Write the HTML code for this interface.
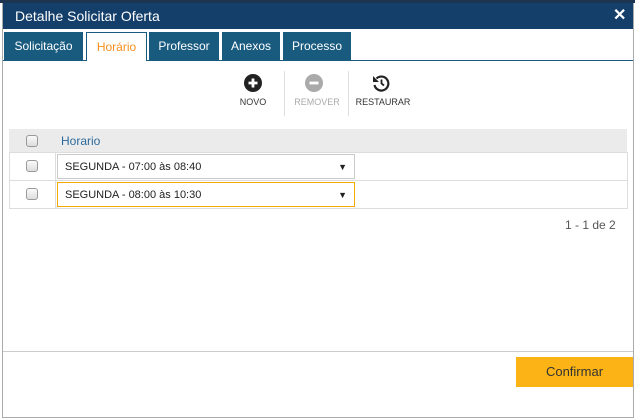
<!DOCTYPE html>
<html><head><style>
*{box-sizing:border-box;margin:0;padding:0}
body{width:635px;height:420px;background:#fff;font-family:"Liberation Sans",sans-serif;position:relative;overflow:hidden}
.a{position:absolute}
.tab{position:absolute;top:32px;height:28px;background:#195a7f;color:#fff;font-size:12px;line-height:29px;text-align:center}
.cb{position:absolute;width:12px;height:12px;border:1px solid #999;border-radius:3px;background:linear-gradient(#fafafa,#ddd)}
.sel{position:absolute;left:57px;width:298px;height:25px;border:1px solid #ccc;font-size:11px;line-height:24px;padding-left:7px;color:#222}
.sel span{position:absolute;right:7px;font-size:9px}
.lbl{position:absolute;top:97px;font-size:9px;color:#333;text-align:center}
</style></head><body>
<div class="a" style="left:0;top:0;width:635px;height:3px;background:#1d3550"></div>
<div class="a" style="left:2px;top:3px;width:632px;height:415px;border:1px solid #aaa;border-top:none"></div>
<div class="a" style="left:3px;top:3px;width:630px;height:26px;background:#143f6a;color:#fff;font-size:14px;line-height:26px;padding-left:12px">Detalhe Solicitar Oferta</div>
<div class="a" style="left:613px;top:5px;color:#fff;font-size:16px;font-weight:bold">✕</div>
<div class="tab" style="left:4px;width:79px">Solicitação</div>
<div class="tab" style="left:86px;width:61px;background:#fff;color:#f7901e;border:1px solid #195a7f;border-bottom:none;height:29px">Horário</div>
<div class="tab" style="left:149px;width:70px">Professor</div>
<div class="tab" style="left:222px;width:58px">Anexos</div>
<div class="tab" style="left:283px;width:68px">Processo</div>
<div class="a" style="left:3px;top:60px;width:630px;height:1px;background:#195a7f"></div>
<div class="a" style="left:87px;top:60px;width:59px;height:1px;background:#fff"></div>
<svg class="a" style="left:244px;top:74px" width="18" height="18"><circle cx="9" cy="9" r="9" fill="#222"/><path d="M9 4.5v9M4.5 9h9" stroke="#fff" stroke-width="2.8"/></svg>
<svg class="a" style="left:305px;top:74px" width="18" height="18"><circle cx="9" cy="9" r="9" fill="#aaa"/><path d="M4.5 9h9" stroke="#fff" stroke-width="2.8"/></svg>
<svg class="a" style="left:372px;top:74px" width="18" height="18"><path d="M4.5 4.5A7 7 0 1 1 2.5 11" fill="none" stroke="#222" stroke-width="2.2"/><path d="M1 2v6h6z" fill="#222"/><path d="M9.5 5.5v4l2.5 2" fill="none" stroke="#222" stroke-width="1.8"/></svg>
<div class="lbl" style="left:233px;width:40px">NOVO</div>
<div class="lbl" style="left:292px;width:50px;color:#aaa">REMOVER</div>
<div class="lbl" style="left:352px;width:62px">RESTAURAR</div>
<div class="a" style="left:284px;top:71px;width:1px;height:45px;background:#ddd"></div>
<div class="a" style="left:348px;top:71px;width:1px;height:45px;background:#ddd"></div>
<div class="a" style="left:9px;top:129px;width:618px;height:24px;background:#ebebeb"></div>
<div class="cb" style="left:26px;top:135px"></div>
<div class="a" style="left:61px;top:134px;font-size:12px;color:#2d6a9a">Horario</div>
<div class="a" style="left:9px;top:152px;width:619px;height:57px;border:1px solid #ddd"></div>
<div class="a" style="left:9px;top:180px;width:619px;height:1px;background:#ddd"></div>
<div class="a" style="left:55px;top:152px;width:1px;height:57px;background:#ddd"></div>
<div class="cb" style="left:26px;top:160px"></div>
<div class="cb" style="left:26px;top:188px"></div>
<div class="sel" style="top:154px">SEGUNDA - 07:00 às 08:40<span>▼</span></div>
<div class="sel" style="top:182px;border-color:#f5a800">SEGUNDA - 08:00 às 10:30<span>▼</span></div>
<div class="a" style="left:565px;top:218px;font-size:12px;color:#555">1 - 1 de 2</div>
<div class="a" style="left:3px;top:351px;width:630px;height:1px;background:#ccc"></div>
<div class="a" style="left:516px;top:357px;width:117px;height:30px;background:#fbb316;color:#333;font-size:13px;line-height:30px;text-align:center">Confirmar</div>
</body></html>
